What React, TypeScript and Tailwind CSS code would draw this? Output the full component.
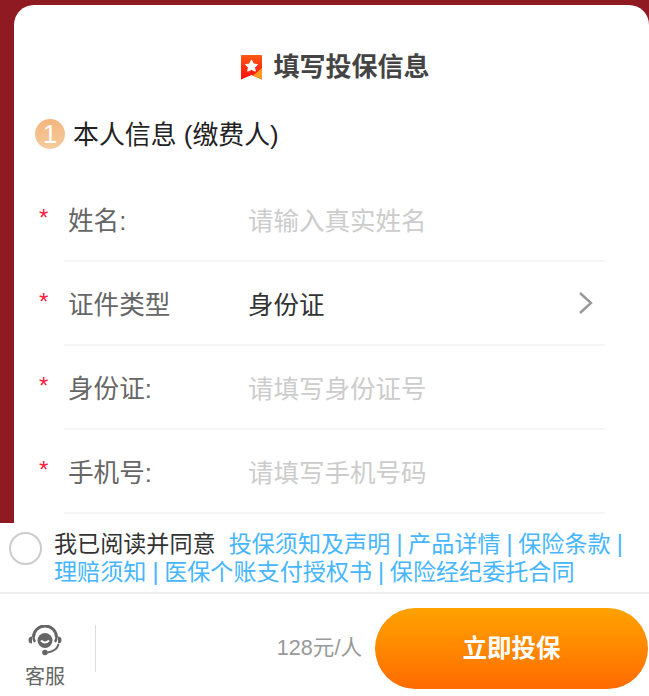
function Row({ label, value, placeholder, chevron }: { label: string; value?: string; placeholder?: string; chevron?: boolean }) {
  return (
    <div className="flex h-[84px] items-center relative ml-[50px] mr-[44px] border-b-2 border-[#f5f5f5]">
      <span className="absolute -left-[25px] top-[28px] text-[24px] leading-none text-[#ff1a3c]">*</span>
      <span className="w-[185px] pl-[5px] pt-[4px] -ml-[1px] text-[25.6px] text-[#666666]">{label}</span>
      <span className={"flex-1 pt-[4px] text-[25.5px] " + (value ? "text-[#333333]" : "text-[#cccccc]")}>{value ?? placeholder}</span>
      {chevron && (
        <svg width="16" height="24" viewBox="0 0 16 24" className="mr-[11px]" fill="none" stroke="#999999" strokeWidth="2.4">
          <path d="M2 2 L13 12 L2 22" />
        </svg>
      )}
    </div>
  );
}

function Sep() {
  return <span className="tracking-[-0.35px]"> | </span>;
}

export default function App() {
  return (
    <div className="w-[649px] h-[696px] overflow-hidden bg-[#8f1a22] pt-[5px] flex flex-col font-['Liberation_Sans','Noto_Sans_CJK_SC',sans-serif]">
      <div className="flex-1 ml-[14px] bg-white rounded-t-[20px] flex flex-col">
        <div className="flex items-center justify-center gap-[11px] pt-[39px] pl-[8px] h-[84px]">
          <svg width="21" height="25" viewBox="0 0 21 25" className="mt-[2px]">
            <defs>
              <linearGradient id="b" x1="0" y1="0" x2="0" y2="1">
                <stop offset="0" stopColor="#ff5a10" />
                <stop offset="1" stopColor="#ff0a10" />
              </linearGradient>
            </defs>
            <path d="M1 0 H20 a1 1 0 0 1 1 1 V24.5 L10.5 20 L0 24.5 V1 a1 1 0 0 1 1-1Z" fill="url(#b)" />
            <path d="M21 13 V24.5 L12 20.6 Z" fill="#ff9a1f" />
            <path d="M10.5 5 L12.5 9 L16.5 9.6 L13.6 12.4 L14.3 16.2 L10.5 14.4 L6.7 16.2 L7.4 12.4 L4.5 9.6 L8.5 9Z" fill="#fff" strokeLinejoin="round" stroke="#fff" strokeWidth="1" />
          </svg>
          <span className="text-[26px] font-bold text-[#444444] leading-none">填写投保信息</span>
        </div>
        <div className="flex items-center ml-[21px] mt-[30px] h-[30px]">
          <span className="w-[30px] h-[30px] rounded-full bg-gradient-to-b from-[#f3b57c] to-[#f6cb9f] text-white text-[26px] leading-[30px] text-center">1</span>
          <span className="ml-[8px] pt-[2px] text-[25.9px] text-[#222222]">本人信息 (缴费人)</span>
        </div>
        <div className="mt-[29px]">
          <Row label="姓名:" placeholder="请输入真实姓名" />
          <Row label="证件类型" value="身份证" chevron />
          <Row label="身份证:" placeholder="请填写身份证号" />
          <Row label="手机号:" placeholder="请填写手机号码" />
        </div>
      </div>
      <div className="bg-white h-[71px] border-b-2 border-[#eeeeee] flex items-start pl-[9px]">
        <span className="mt-[9px] w-[33px] h-[33px] rounded-full border-[2.5px] border-[#cccccc] shrink-0" />
        <p className="ml-[12px] mt-[7px] text-[23.1px] leading-[28px] w-[590px] text-[#45b6ff]">
          <span className="text-[#333333] mr-[13px]">我已阅读并同意</span>
          投保须知及声明<Sep />产品详情<Sep />保险条款<Sep />理赔须知<Sep />医保个账支付授权书<Sep />保险经纪委托合同
        </p>
      </div>
      <div className="bg-white h-[102px] flex items-center pt-[6px]">
        <div className="w-[90px] shrink-0 flex flex-col items-center -mt-[9px]">
          <svg width="34" height="31" viewBox="0 0 34 31" fill="none" className="mr-[1px]">
            <path d="M5.5 12 a11.5 11 0 0 1 23 0" stroke="#666" strokeWidth="3" />
            <path d="M5.5 12 q0 3 1.5 5" stroke="#666" strokeWidth="2.5" />
            <path d="M28.5 12 q0 3 -1.5 5" stroke="#666" strokeWidth="2.5" />
            <circle cx="17" cy="15.5" r="7.5" fill="#666" />
            <path d="M13 15.5 q4 4 8 0" stroke="#fff" strokeWidth="1.8" />
            <path d="M4 11.5 a3.5 3.5 0 0 0 0 7z" fill="#666" />
            <path d="M30 11.5 a3.5 3.5 0 0 1 0 7z" fill="#666" />
            <path d="M30.5 19 q-1.5 7 -11 8.5" stroke="#666" strokeWidth="2" />
            <circle cx="17" cy="27.5" r="2.8" fill="#666" />
          </svg>
          <span className="text-[20px] leading-[24px] text-[#666666] mt-[9px] -mb-[26px]">客服</span>
        </div>
        <span className="w-px h-[47px] bg-[#dddddd] ml-[5px]" />
        <span className="ml-auto text-[21.6px] text-[#999999] mr-[13px]">128元/人</span>
        <button className="w-[273px] h-[81px] mr-[1px] pt-[2px] rounded-full bg-gradient-to-b from-[#ffa200] to-[#ff6a00] text-white text-[24.5px] font-bold">立即投保</button>
      </div>
    </div>
  );
}
